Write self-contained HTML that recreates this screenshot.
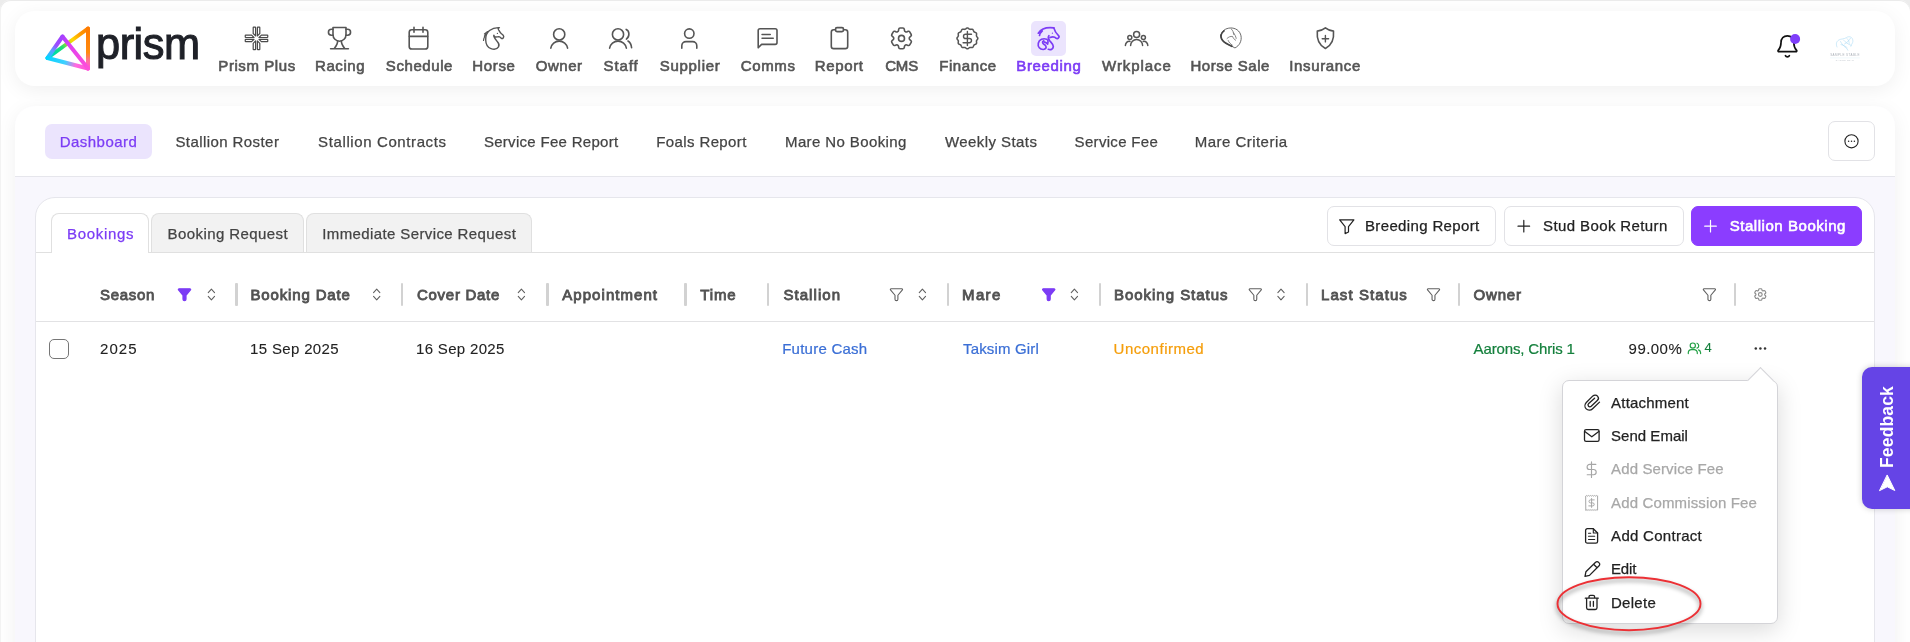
<!DOCTYPE html>
<html lang="en"><head><meta charset="utf-8"><title>Prism - Breeding</title>
<style>
*{box-sizing:border-box;margin:0;padding:0}
html,body{width:1910px;height:642px;overflow:hidden;background:#fff;font-family:"Liberation Sans",sans-serif;color:#222}
.abs{position:absolute}
#wrap{position:absolute;left:0;top:0;width:1910px;height:642px;overflow:hidden;will-change:transform}
#top{position:absolute;left:15px;top:11px;width:1880px;height:75px;background:#fff;border-radius:20px;box-shadow:0 4px 20px rgba(0,0,0,.064)}
#main{position:absolute;left:15px;top:106px;width:1880px;height:560px;background:#f8f7fd;border-radius:20px 20px 0 0;box-shadow:0 4px 20px rgba(0,0,0,.064);overflow:hidden}
#subnav{position:absolute;left:0;top:0;width:1880px;height:71px;background:#fff;border-bottom:1px solid #e6e6ec}
#frame{position:absolute;left:0;top:0;width:1910px;height:700px;border-radius:11px 11px 0 0;box-shadow:0 0 0 30px #ececec, inset 0 1px 0 #ebebeb, inset 1px 0 0 #f3f3f3;pointer-events:none;z-index:50}
.nav{position:absolute;top:55px;height:22px;line-height:22px;font-size:15px;font-weight:400;-webkit-text-stroke:.62px currentColor;color:#555;white-space:nowrap;}
.nav.on{color:#7c3cf5}
.sn{-webkit-text-stroke:.25px currentColor;position:absolute;top:124px;height:35px;line-height:35px;font-size:15px;color:#444;white-space:nowrap}
#card{position:absolute;left:35px;top:197px;width:1840px;height:500px;background:#fff;border:1px solid #e6e6ec;border-radius:20px 20px 0 0}
.sn.on{color:#7c3cf5}
.btn.pri{background:#8b3dff;border-color:#8b3dff}
.tab{position:absolute;top:213px;height:39px;line-height:39px;font-size:15px;color:#444;background:#f2f2f2;border:1px solid #e0e0e0;border-bottom:none;border-radius:8px 8px 0 0;text-align:center;white-space:nowrap}
.tt{-webkit-text-stroke:.25px currentColor;position:absolute;top:223px;height:22px;line-height:22px;font-size:15px;color:#444;white-space:nowrap}
.tt.on{color:#7c3cf5}
.bt{-webkit-text-stroke:.25px currentColor;position:absolute;top:215px;height:22px;line-height:22px;font-size:15px;color:#222;white-space:nowrap}
.bt.pri{color:#fff;-webkit-text-stroke:.6px currentColor}
.tab.on{background:#fff;height:40px}
.btn{position:absolute;top:206px;height:40px;line-height:38px;font-size:15px;color:#222;background:#fff;border:1px solid #e2e2e6;border-radius:7px;white-space:nowrap}
.th{position:absolute;top:284px;height:22px;line-height:22px;font-size:15px;font-weight:400;-webkit-text-stroke:.85px currentColor;color:#525252;white-space:nowrap}
.sep{position:absolute;top:283px;width:2.5px;height:23px;background:#d2d2d2;border-radius:1px}
.td{-webkit-text-stroke:.1px currentColor;position:absolute;top:337.700px;height:22px;line-height:22px;font-size:15px;color:#222;white-space:nowrap}
.mi{-webkit-text-stroke:.25px currentColor;position:absolute;height:22px;line-height:22px;font-size:15px;color:#222;white-space:nowrap}
.mi.dis{color:#a8a8a8}
</style></head><body>
<div id="wrap">
<div id="top"></div>
<div id="frame"></div>
<div id="wm" class="abs" style="left:96px;top:18.700px;font-size:44.500px;line-height:50px;color:#1f2128;letter-spacing:-.5px;-webkit-text-stroke:1.100px #1f2128;transform:scaleX(.975);transform-origin:0 0">prism</div>
<div class="abs" style="left:1031px;top:21px;width:35px;height:35px;border-radius:5px;background:#ebe4fd"></div>
<svg id="topsvg" class="abs" style="left:0;top:0" width="1910" height="100" viewBox="0 0 1910 100" fill="none" stroke="#555" stroke-width="1.6" stroke-linecap="round" stroke-linejoin="round">

<!-- logo -->
<defs>
<linearGradient id="lg1" gradientUnits="userSpaceOnUse" x1="46" y1="58.5" x2="62" y2="35"><stop offset="0" stop-color="#00d5ff"/><stop offset=".35" stop-color="#5aa0ff"/><stop offset=".6" stop-color="#9b4dff"/><stop offset="1" stop-color="#a040ff"/></linearGradient>
<linearGradient id="lg2" gradientUnits="userSpaceOnUse" x1="62" y1="35" x2="88" y2="69.5"><stop offset="0" stop-color="#a040ff"/><stop offset=".3" stop-color="#e040f0"/><stop offset="1" stop-color="#ff4fd8"/></linearGradient>
<linearGradient id="lg3" gradientUnits="userSpaceOnUse" x1="88" y1="69.5" x2="46" y2="58.5"><stop offset="0" stop-color="#ff4fd8"/><stop offset=".3" stop-color="#ff6ae0"/><stop offset=".55" stop-color="#40d0ff"/><stop offset="1" stop-color="#00d5ff"/></linearGradient>
<linearGradient id="lg4" gradientUnits="userSpaceOnUse" x1="88" y1="27" x2="88" y2="69.5"><stop offset="0" stop-color="#ff7a00"/><stop offset=".6" stop-color="#ff8a10"/><stop offset=".8" stop-color="#ff70a0"/><stop offset="1" stop-color="#ff4fd8"/></linearGradient>
<linearGradient id="lg5" gradientUnits="userSpaceOnUse" x1="88" y1="27" x2="46" y2="58.5"><stop offset="0" stop-color="#ff7a00"/><stop offset=".2" stop-color="#ff9a00"/><stop offset=".38" stop-color="#ffd800"/><stop offset=".5" stop-color="#b0e020"/><stop offset=".62" stop-color="#20e070"/><stop offset=".8" stop-color="#00dca0"/><stop offset="1" stop-color="#00d5ff"/></linearGradient>
</defs>
<g stroke-width="4">
<path d="M88 28.5L47.5 58" stroke="url(#lg5)"/>
<path d="M88 28.5V68.5" stroke="url(#lg4)"/>
<path d="M47.5 58L62.5 36.5" stroke="url(#lg1)"/>
<path d="M88 68.5L47.5 58" stroke="url(#lg3)"/>
<path d="M62.5 36.5L88 68.5" stroke="url(#lg2)"/>
</g>
<!-- prism plus -->
<path d="M253.20 27.60Q253.20 27.15 253.65 27.15L255.15 27.15Q255.60 27.15 255.60 27.60L255.60 35.90L253.20 33.50ZM259.80 27.60Q259.80 27.15 259.35 27.15L257.85 27.15Q257.40 27.15 257.40 27.60L257.40 35.90L259.80 33.50ZM267.30 35.10Q267.75 35.10 267.75 35.55L267.75 37.05Q267.75 37.50 267.30 37.50L259.00 37.50L261.40 35.10ZM267.30 41.70Q267.75 41.70 267.75 41.25L267.75 39.75Q267.75 39.30 267.30 39.30L259.00 39.30L261.40 41.70ZM259.80 49.20Q259.80 49.65 259.35 49.65L257.85 49.65Q257.40 49.65 257.40 49.20L257.40 40.90L259.80 43.30ZM253.20 49.20Q253.20 49.65 253.65 49.65L255.15 49.65Q255.60 49.65 255.60 49.20L255.60 40.90L253.20 43.30ZM245.70 41.70Q245.25 41.70 245.25 41.25L245.25 39.75Q245.25 39.30 245.70 39.30L254.00 39.30L251.60 41.70ZM245.70 35.10Q245.25 35.10 245.25 35.55L245.25 37.05Q245.25 37.50 245.70 37.50L254.00 37.50L251.60 35.10Z" stroke="#4a4a4a" stroke-width="1.2"/>
<!-- trophy -->
<path d="M333 27.5h13v7.2a6.5 6.5 0 0 1-13 0z"/>
<path d="M333 29.3h-1.6a2.9 2.9 0 0 0 0 5.9h1.8M346 29.3h1.6a2.9 2.9 0 0 1 0 5.9h-1.8"/>
<path d="M337.6 40.8c.3 3.2-1.600 5.600-3.300 7.700M341.400 40.800c-.3 3.200 1.600 5.600 3.300 7.700M330.600 48.800h17.800"/>
<!-- calendar -->
<rect x="409.200" y="29.800" width="18.600" height="19.200" rx="2.600"/>
<path d="M414 27.300v5M423 27.300v5M409.400 36.400h18.200"/>
<!-- horse -->
<path d="M499.400 27.700C496 27.500 492.500 28.300 489.500 30.500C486.800 32.600 485.600 36.500 485.700 40C485.800 44 488 47.600 491 48.600C494 49.600 497.200 48.900 498.500 46.800C499.600 45 498.800 43.200 497.400 41.700C496 40.200 494.600 38.600 493.900 36.600C493.650 35.900 493.700 35.400 493.900 35.200C494.100 36.200 494.600 36.900 495.400 37C497 37.200 498.200 36.400 499.600 36.900C500.600 37.300 501 38.400 501.800 38.600C502.800 38.800 503.800 37.400 503.700 36.400C503.600 35.200 502.400 34.400 501.400 33.700C500 32.700 499.300 31 498.700 30C498.400 29.400 498.200 28.900 498.200 28.500C498.600 28.100 499 27.900 499.400 27.700Z" stroke-width="1.400"/>
<path d="M487.600 31.600l-3.200 2.300M486.300 33.500l-1.900 2.700M485.500 35.500c-1.200 1.500-1.800 3.200-2 5" stroke-width="1.200"/>
<circle cx="497.400" cy="33.400" r=".65" fill="#555" stroke="none"/>
<!-- owner -->
<circle cx="559.200" cy="34.400" r="5.600"/><path d="M550.800 48.200a8.500 8.300 0 0 1 16.800 0"/>
<!-- staff -->
<circle cx="618" cy="34.400" r="5.600"/><path d="M609.600 48.200a8.500 8.300 0 0 1 16.800 0"/>
<path d="M626.200 29.400c3.300 1.300 3.800 7 .2 9.700M628 41c2.200 1.400 3.400 3.800 3.600 6.800"/>
<!-- supplier -->
<circle cx="689.300" cy="33.600" r="4.700"/><path d="M681.800 48.200v-2.400a4.200 4.200 0 0 1 4.200-4.200h6.600a4.200 4.200 0 0 1 4.200 4.200v2.400"/>
<!-- comms -->
<path d="M758.200 47.800v-17.200a1.800 1.800 0 0 1 1.800-1.800h15.200a1.800 1.800 0 0 1 1.800 1.800v12a1.800 1.800 0 0 1-1.800 1.800h-13.600z"/>
<path d="M762 34.500h8.300M762 38.300h11.300" stroke-width="1.400"/>
<!-- report -->
<path d="M835.500 29.800h-1.800a2.400 2.400 0 0 0-2.400 2.400v14a2.400 2.400 0 0 0 2.400 2.400h11.600a2.400 2.400 0 0 0 2.400-2.400v-14a2.400 2.400 0 0 0-2.400-2.400h-1.800"/>
<rect x="835.500" y="27.600" width="8" height="4" rx="1.500"/>

<!-- cms gear -->
<g transform="translate(887.70 24.60) scale(1.150)" stroke-width="1.39"><path d="M9.594 3.94c.09-.542.56-.94 1.11-.94h2.593c.55 0 1.02.398 1.11.94l.213 1.281c.063.374.313.686.645.87.074.04.147.083.22.127.325.196.72.257 1.075.124l1.217-.456a1.125 1.125 0 0 1 1.37.49l1.296 2.247a1.125 1.125 0 0 1-.26 1.431l-1.003.827c-.293.241-.438.613-.43.992a7.723 7.723 0 0 1 0 .255c-.008.378.137.75.43.991l1.004.827c.424.35.534.955.26 1.43l-1.298 2.247a1.125 1.125 0 0 1-1.369.491l-1.217-.456c-.355-.133-.75-.072-1.076.124a6.47 6.47 0 0 1-.22.128c-.331.183-.581.495-.644.869l-.213 1.281c-.09.543-.56.94-1.11.94h-2.594c-.55 0-1.019-.398-1.11-.94l-.213-1.281c-.062-.374-.312-.686-.644-.87a6.52 6.52 0 0 1-.22-.127c-.325-.196-.72-.257-1.076-.124l-1.217.456a1.125 1.125 0 0 1-1.369-.49l-1.297-2.247a1.125 1.125 0 0 1 .26-1.431l1.004-.827c.292-.24.437-.613.43-.991a6.932 6.932 0 0 1 0-.255c.007-.38-.138-.751-.43-.992l-1.004-.827a1.125 1.125 0 0 1-.26-1.43l1.297-2.247a1.125 1.125 0 0 1 1.37-.491l1.216.456c.356.133.751.072 1.076-.124.072-.044.146-.086.22-.128.332-.183.582-.495.644-.869l.214-1.28Z"/><circle cx="12" cy="12" r="2.600"/></g>
<!-- finance -->
<path d="M967.4 28.0L967.7 28.0L967.9 28.1L968.2 28.2L968.5 28.4L968.7 28.6L968.9 28.8L969.2 29.0L969.4 29.1L969.6 29.2L969.8 29.3L970.1 29.4L970.3 29.4L970.6 29.3L970.9 29.3L971.2 29.3L971.5 29.2L971.8 29.2L972.1 29.2L972.4 29.3L972.6 29.4L972.8 29.6L973.0 29.8L973.2 30.0L973.3 30.3L973.4 30.5L973.5 30.8L973.6 31.1L973.8 31.3L973.9 31.6L974.0 31.8L974.2 31.9L974.5 32.0L974.7 32.2L975.0 32.3L975.3 32.4L975.5 32.5L975.8 32.6L976.0 32.8L976.2 33.0L976.4 33.2L976.5 33.4L976.6 33.7L976.6 34.0L976.6 34.3L976.5 34.6L976.5 34.9L976.5 35.2L976.4 35.5L976.4 35.7L976.5 36.0L976.6 36.2L976.7 36.4L976.8 36.6L977.0 36.9L977.2 37.1L977.4 37.3L977.6 37.6L977.7 37.9L977.8 38.1L977.8 38.4L977.8 38.7L977.7 38.9L977.6 39.2L977.4 39.5L977.2 39.7L977.0 39.9L976.8 40.2L976.7 40.4L976.6 40.6L976.5 40.8L976.4 41.1L976.4 41.3L976.5 41.6L976.5 41.9L976.5 42.2L976.6 42.5L976.6 42.8L976.6 43.1L976.5 43.4L976.4 43.6L976.2 43.8L976.0 44.0L975.8 44.2L975.5 44.3L975.3 44.4L975.0 44.5L974.7 44.6L974.5 44.8L974.2 44.9L974.0 45.0L973.9 45.2L973.8 45.5L973.6 45.7L973.5 46.0L973.4 46.3L973.3 46.5L973.2 46.8L973.0 47.0L972.8 47.2L972.6 47.4L972.4 47.5L972.1 47.6L971.8 47.6L971.5 47.6L971.2 47.5L970.9 47.5L970.6 47.5L970.3 47.4L970.1 47.4L969.8 47.5L969.6 47.6L969.4 47.7L969.2 47.8L968.9 48.0L968.7 48.2L968.5 48.4L968.2 48.6L967.9 48.7L967.7 48.8L967.4 48.8L967.1 48.8L966.9 48.7L966.6 48.6L966.3 48.4L966.1 48.2L965.9 48.0L965.6 47.8L965.4 47.7L965.2 47.6L965.0 47.5L964.7 47.4L964.5 47.4L964.2 47.5L963.9 47.5L963.6 47.5L963.3 47.6L963.0 47.6L962.7 47.6L962.4 47.5L962.2 47.4L962.0 47.2L961.8 47.0L961.6 46.8L961.5 46.5L961.4 46.3L961.3 46.0L961.2 45.7L961.0 45.5L960.9 45.2L960.8 45.0L960.6 44.9L960.3 44.8L960.1 44.6L959.8 44.5L959.5 44.4L959.3 44.3L959.0 44.2L958.8 44.0L958.6 43.8L958.4 43.6L958.3 43.4L958.2 43.1L958.2 42.8L958.2 42.5L958.3 42.2L958.3 41.9L958.3 41.6L958.4 41.3L958.4 41.1L958.3 40.8L958.2 40.6L958.1 40.4L958.0 40.2L957.8 39.9L957.6 39.7L957.4 39.5L957.2 39.2L957.1 38.9L957.0 38.7L957.0 38.4L957.0 38.1L957.1 37.9L957.2 37.6L957.4 37.3L957.6 37.1L957.8 36.9L958.0 36.6L958.1 36.4L958.2 36.2L958.3 36.0L958.4 35.7L958.4 35.5L958.3 35.2L958.3 34.9L958.3 34.6L958.2 34.3L958.2 34.0L958.2 33.7L958.3 33.4L958.4 33.2L958.6 33.0L958.8 32.8L959.0 32.6L959.3 32.5L959.5 32.4L959.8 32.3L960.1 32.2L960.3 32.0L960.6 31.9L960.8 31.8L960.9 31.6L961.0 31.3L961.2 31.1L961.3 30.8L961.4 30.5L961.5 30.3L961.6 30.0L961.8 29.8L962.0 29.6L962.2 29.4L962.4 29.3L962.7 29.2L963.0 29.2L963.3 29.2L963.6 29.3L963.9 29.3L964.2 29.3L964.5 29.4L964.7 29.4L965.0 29.3L965.2 29.2L965.4 29.1L965.6 29.0L965.9 28.8L966.1 28.6L966.3 28.4L966.6 28.2L966.9 28.1L967.1 28.0Z" stroke-width="1.500"/>
<path d="M971.500 34.300h-5.900a2.100 2.100 0 0 0 0 4.200h3.800a2.100 2.100 0 0 1 0 4.200h-6.300M967.400 31.500v14" stroke-width="1.400"/>
<!-- breeding -->
<g stroke="#7c3cf5" stroke-width="1.700">
<path d="M1038.300 33.200c2.500-3.800 7.800-6.300 15.500-5.300M1039.500 35.500c.3-1.800 1.400-3.200 2.800-4.500"/>
<path d="M1053.800 27.900c.8 3.200 2.600 5.700 4.900 8 .6.600.2 1.600-.5 2.300-.5.600-1.400.7-1.900.1-1.500-1.500-4.200-1.800-6.300-.7"/>
<path d="M1048.900 35.600c-1 1.500-.6 3.400.6 5 1.500 2 3.800 3.500 3.800 6 0 2.300-2.400 3.600-5 2.700"/>
<path d="M1046.700 39.300c-3.500-1.500-7.600.3-8.400 4-.8 3.600 1.800 6.300 5 6.200 2.400-.1 3.500-1.800 2.400-3.600-.9-1.500-2.800-1.500-3.100-3.200-.2-1 .3-1.700 1.100-2"/>
<path d="M1044 41.800c1.500.3 2.900 1.100 3.600 2.400.6-1.400.6-2.800.1-4.200"/>
</g>
<circle cx="1052.400" cy="33.200" r=".6" fill="#7c3cf5" stroke="none"/>
<!-- wrkplace -->
<g stroke-width="1.500">
<circle cx="1136.600" cy="34.400" r="3"/><circle cx="1129.800" cy="37.500" r="2"/><circle cx="1143.400" cy="37.500" r="2"/>
<path d="M1130.600 45.600a6 6.200 0 0 1 12 0M1125.400 45.600c0-2.600 1.900-4.600 4.600-4.200M1147.800 45.600c0-2.600-1.900-4.600-4.600-4.200"/>
</g>
<!-- horse sale -->
<g stroke="#444">
<path d="M1234.600 47.700c-4-2.600-9.300-3.500-12.400-7.600-2.200-3-1.400-7.400 1.800-9.900 3.600-2.800 9.200-3 13.100-.4 4.100 2.800 5.300 8.700 2.800 13.400-1 1.900-2.700 3.600-4.500 4.500z" stroke-width=".8"/>
<path d="M1231.800 46.300c-3.600-2-8.200-3.200-10.200-7.400-1.200-2.600-.2-5.900 2.400-8" stroke-width="1.700"/>
<path d="M1231.200 28.900c1.800 1.800 2.500 3.600 2.600 5.600M1227 38.500c1.500-1.600 3.600-2.400 5.600-2 .6 1.700 1.600 3 3 3.700M1228.200 40.500c.8 2 2.200 3.500 4 4.500M1233.600 33c1.300 1.600 2.200 3.400 2.600 5.400" stroke-width=".8" stroke="#666"/>
</g>
<!-- insurance -->
<path d="M1325.400 27.900c-2.300 1.900-5 2.900-8.100 3.200-.7 7.600 1.600 14 8.100 17.400 6.500-3.400 8.800-9.800 8.100-17.400-3.100-.3-5.800-1.300-8.100-3.200z"/>
<path d="M1325.400 35.500v6.400M1322.200 38.700h6.400" stroke-width="1.400"/>
<!-- bell -->
<g stroke="#111" stroke-width="1.700">
<path d="M1778.200 50.300c1.900-2 2.800-4.600 2.800-7.500 0-4.300 2.700-7 6.400-7s6.400 2.700 6.400 7c0 2.900.9 5.500 2.800 7.500.4.600 0 1.400-.8 1.400h-16.800c-.8 0-1.200-.8-.8-1.400z"/>
<path d="M1785.400 55.700c.8 1.500 3.200 1.500 4 0"/>
</g>
<circle cx="1795.100" cy="39" r="5" fill="#7f3ffa" stroke="none"/>
<!-- avatar -->
<g stroke="#9fd4f2" stroke-width=".5">
<path d="M1837 47c-1.200-2.500-.8-5.500 1.800-7 2.400-1.400 5.400-.8 7.600-2.400 1.500-1.100 3.600-1.200 5-.1 1.400 1.200 1.900 3.400 1.200 5.200-.5 1.300-1.600 2.200-1.800 3.600M1840.500 41.500c1.200 2.600 3.200 4.600 5.400 6.300.9.700 1.600 1.500 2 2.500M1843.500 40c2 2.500 4.600 4.200 7.500 5.300M1847 38.500c1.400 1.300 2.100 3 2.300 4.900M1841 44.600c2.500.4 4.600 1.500 6.300 3.300M1850.500 38.200c-1.400 2.500-3.500 4.400-6 5.800"/>
</g>
<text x="1845" y="55.600" font-family="Liberation Sans, sans-serif" font-size="3" letter-spacing=".42" text-anchor="middle" fill="#aab0b8" stroke="none">SAMPLE STABLE</text>
<path d="M1830.500 57.900h29" stroke="#d8edf8" stroke-width=".4"/>
<text x="1845" y="61" font-family="Liberation Sans, sans-serif" font-size="2.200" letter-spacing=".3" text-anchor="middle" fill="#c0c5cc" stroke="none">RACING TEAM</text>

</svg>
<div class="nav" style="left:218.30px;letter-spacing:0.581px">Prism Plus</div>
<div class="nav" style="left:315.00px;letter-spacing:0.570px">Racing</div>
<div class="nav" style="left:385.80px;letter-spacing:0.585px">Schedule</div>
<div class="nav" style="left:472.20px;letter-spacing:0.683px">Horse</div>
<div class="nav" style="left:535.80px;letter-spacing:0.529px">Owner</div>
<div class="nav" style="left:603.60px;letter-spacing:0.847px">Staff</div>
<div class="nav" style="left:659.80px;letter-spacing:0.694px">Supplier</div>
<div class="nav" style="left:740.70px;letter-spacing:0.634px">Comms</div>
<div class="nav" style="left:814.70px;letter-spacing:0.649px">Report</div>
<div class="nav" style="left:885.20px;letter-spacing:-0.164px">CMS</div>
<div class="nav" style="left:939.20px;letter-spacing:0.596px">Finance</div>
<div class="nav on" style="left:1016.30px;letter-spacing:0.657px">Breeding</div>
<div class="nav" style="left:1102.10px;letter-spacing:0.929px">Wrkplace</div>
<div class="nav" style="left:1190.50px;letter-spacing:0.516px">Horse Sale</div>
<div class="nav" style="left:1289.20px;letter-spacing:0.659px">Insurance</div>
<div id="main"><div id="subnav"></div></div>
<div class="abs" style="left:45px;top:124px;width:107px;height:35px;border-radius:7px;background:#ebe4fd"></div>
<div class="sn on" style="left:59.80px;letter-spacing:0.445px">Dashboard</div>
<div class="sn" style="left:175.40px;letter-spacing:0.425px">Stallion Roster</div>
<div class="sn" style="left:318.10px;letter-spacing:0.609px">Stallion Contracts</div>
<div class="sn" style="left:483.90px;letter-spacing:0.297px">Service Fee Report</div>
<div class="sn" style="left:656.30px;letter-spacing:0.382px">Foals Report</div>
<div class="sn" style="left:785.00px;letter-spacing:0.389px">Mare No Booking</div>
<div class="sn" style="left:945.00px;letter-spacing:0.422px">Weekly Stats</div>
<div class="sn" style="left:1074.60px;letter-spacing:0.321px">Service Fee</div>
<div class="sn" style="left:1194.70px;letter-spacing:0.472px">Mare Criteria</div>
<div class="abs" style="left:1828px;top:121px;width:47px;height:40px;border:1px solid #e2e2e6;border-radius:7px;background:#fff"></div>
<div id="card"></div>
<div class="abs" style="left:36px;top:252px;width:1838px;height:1px;background:#e0e0e0"></div>
<div class="tab on" style="left:51px;width:98px"></div>
<div class="tt on" style="left:67.10px;letter-spacing:0.670px">Bookings</div>
<div class="tab" style="left:151px;width:153px"></div>
<div class="tt" style="left:167.60px;letter-spacing:0.409px">Booking Request</div>
<div class="tab" style="left:306px;width:226px"></div>
<div class="tt" style="left:322.20px;letter-spacing:0.392px">Immediate Service Request</div>
<div class="btn" style="left:1327px;width:169px"></div>
<div class="bt" style="left:1365.00px;letter-spacing:0.352px">Breeding Report</div>
<div class="btn" style="left:1504px;width:180px"></div>
<div class="bt" style="left:1543.10px;letter-spacing:0.389px">Stud Book Return</div>
<div class="btn pri" style="left:1691px;width:171px"></div>
<div class="bt pri" style="left:1729.70px;letter-spacing:0.545px">Stallion Booking</div>
<div class="th" style="left:100.00px;letter-spacing:0.694px">Season</div>
<div class="th" style="left:250.50px;letter-spacing:0.844px">Booking Date</div>
<div class="th" style="left:417.00px;letter-spacing:0.720px">Cover Date</div>
<div class="th" style="left:562.30px;letter-spacing:1.045px">Appointment</div>
<div class="th" style="left:700.30px;letter-spacing:0.822px">Time</div>
<div class="th" style="left:783.40px;letter-spacing:1.064px">Stallion</div>
<div class="th" style="left:962.00px;letter-spacing:1.389px">Mare</div>
<div class="th" style="left:1114.00px;letter-spacing:0.969px">Booking Status</div>
<div class="th" style="left:1321.00px;letter-spacing:1.076px">Last Status</div>
<div class="th" style="left:1473.60px;letter-spacing:0.804px">Owner</div>
<div class="sep" style="left:235.2px"></div>
<div class="sep" style="left:400.8px"></div>
<div class="sep" style="left:546px"></div>
<div class="sep" style="left:684px"></div>
<div class="sep" style="left:766.8px"></div>
<div class="sep" style="left:946.5px"></div>
<div class="sep" style="left:1098.5px"></div>
<div class="sep" style="left:1305.6px"></div>
<div class="sep" style="left:1457.7px"></div>
<div class="sep" style="left:1733.6px"></div>
<div class="abs" style="left:36px;top:321px;width:1838px;height:1px;background:#e2e2e4"></div>
<div class="abs" style="left:49px;top:339px;width:20px;height:20px;border:1px solid #767676;border-radius:5px;background:#fff"></div>
<div class="td" style="left:100.00px;letter-spacing:1.058px;color:#222">2025</div>
<div class="td" style="left:250.00px;letter-spacing:0.346px;color:#222">15 Sep 2025</div>
<div class="td" style="left:416.00px;letter-spacing:0.326px;color:#222">16 Sep 2025</div>
<div class="td" style="left:782.20px;letter-spacing:0.241px;-webkit-text-stroke:.22px currentColor;color:#3b6fd6">Future Cash</div>
<div class="td" style="left:963.00px;letter-spacing:0.167px;-webkit-text-stroke:.22px currentColor;color:#3b6fd6">Taksim Girl</div>
<div class="td" style="left:1113.60px;letter-spacing:0.501px;-webkit-text-stroke:.22px currentColor;color:#f59e0b">Unconfirmed</div>
<div class="td" style="left:1473.60px;letter-spacing:-0.145px;-webkit-text-stroke:.22px currentColor;color:#15803d">Aarons, Chris 1</div>
<div class="td" style="left:1628.60px;letter-spacing:0.453px;color:#222">99.00%</div>
<div class="td" style="left:1704.500px;top:337.100px;color:#15803d;font-size:13px">4</div>
<div id="pop" class="abs" style="left:1562px;top:380px;width:216px;height:244px;background:#fff;border:1px solid #d4d4d8;border-radius:7px;box-shadow:0 6px 24px rgba(0,0,0,.15)"></div>
<div class="abs" style="left:1751px;top:371px;width:19px;height:19px;background:#fff;border-left:1px solid #d4d4d8;border-top:1px solid #d4d4d8;transform:rotate(45deg)"></div>
<div class="mi" style="left:1611.10px;letter-spacing:0.200px;top:391.5px">Attachment</div>
<div class="mi" style="left:1611.10px;letter-spacing:0.014px;top:425px">Send Email</div>
<div class="mi dis" style="left:1611.10px;letter-spacing:0.118px;top:458px">Add Service Fee</div>
<div class="mi dis" style="left:1611.10px;letter-spacing:0.139px;top:491.5px">Add Commission Fee</div>
<div class="mi" style="left:1611.10px;letter-spacing:0.284px;top:524.7px">Add Contract</div>
<div class="mi" style="left:1610.90px;letter-spacing:-0.127px;top:558px">Edit</div>
<div class="mi" style="left:1610.90px;letter-spacing:0.317px;top:591.5px">Delete</div>
<div id="fb" class="abs" style="left:1862px;top:367px;width:60px;height:142px;background:#6544e6;border-radius:10px 0 0 10px;box-shadow:0 0 6px rgba(0,0,0,.2)"></div>
<div class="abs" style="left:1886.5px;top:427px;width:0;height:0"><div style="position:absolute;left:-60px;top:-12px;width:120px;height:24px;line-height:24px;text-align:center;transform:rotate(-90deg);color:#fff;font-weight:700;font-size:17.5px;letter-spacing:.15px;white-space:nowrap">Feedback</div></div>
<svg id="mainsvg" class="abs" style="left:0;top:100px" width="1910" height="542" viewBox="0 100 1910 542" fill="none" stroke="#555" stroke-width="1.300" stroke-linecap="round" stroke-linejoin="round">
<path d="M179.10 288.80h10.8a.7.7 0 0 1 .55 1.15l-4.5 5.3v3.9a1.45 1.45 0 0 1-2.9 0v-3.9l-4.5-5.3a.7.7 0 0 1 .55-1.15z" fill="#7c3cf5" stroke="#7c3cf5" stroke-width="1.3"/>
<path d="M208.25 292.70l3.15-3.6 3.15 3.6M208.25 296.30l3.15 3.6 3.15-3.6" stroke="#606060" stroke-width="1.05"/>
<path d="M373.55 292.70l3.15-3.6 3.15 3.6M373.55 296.30l3.15 3.6 3.15-3.6" stroke="#606060" stroke-width="1.05"/>
<path d="M518.25 292.70l3.15-3.6 3.15 3.6M518.25 296.30l3.15 3.6 3.15-3.6" stroke="#606060" stroke-width="1.05"/>
<path d="M891.05 288.80h10.8a.7.7 0 0 1 .55 1.15l-4.5 5.3v3.9a1.45 1.45 0 0 1-2.9 0v-3.9l-4.5-5.3a.7.7 0 0 1 .55-1.15z" stroke="#606060" stroke-width="1.1"/>
<path d="M919.25 292.70l3.15-3.6 3.15 3.6M919.25 296.30l3.15 3.6 3.15-3.6" stroke="#606060" stroke-width="1.05"/>
<path d="M1043.30 288.80h10.8a.7.7 0 0 1 .55 1.15l-4.5 5.3v3.9a1.45 1.45 0 0 1-2.9 0v-3.9l-4.5-5.3a.7.7 0 0 1 .55-1.15z" fill="#7c3cf5" stroke="#7c3cf5" stroke-width="1.3"/>
<path d="M1071.25 292.70l3.15-3.6 3.15 3.6M1071.25 296.30l3.15 3.6 3.15-3.6" stroke="#606060" stroke-width="1.05"/>
<path d="M1249.90 288.80h10.8a.7.7 0 0 1 .55 1.15l-4.5 5.3v3.9a1.45 1.45 0 0 1-2.9 0v-3.9l-4.5-5.3a.7.7 0 0 1 .55-1.15z" stroke="#606060" stroke-width="1.1"/>
<path d="M1277.85 292.70l3.15-3.6 3.15 3.6M1277.85 296.30l3.15 3.6 3.15-3.6" stroke="#606060" stroke-width="1.05"/>
<path d="M1428.10 288.80h10.8a.7.7 0 0 1 .55 1.15l-4.5 5.3v3.9a1.45 1.45 0 0 1-2.9 0v-3.9l-4.5-5.3a.7.7 0 0 1 .55-1.15z" stroke="#606060" stroke-width="1.1"/>
<path d="M1704.00 288.80h10.8a.7.7 0 0 1 .55 1.15l-4.5 5.3v3.9a1.45 1.45 0 0 1-2.9 0v-3.9l-4.5-5.3a.7.7 0 0 1 .55-1.15z" stroke="#606060" stroke-width="1.1"/>
<g transform="translate(1752.57 286.77) scale(0.644)" stroke="#8c8c8c" stroke-width="1.78"><path d="M9.594 3.94c.09-.542.56-.94 1.11-.94h2.593c.55 0 1.02.398 1.11.94l.213 1.281c.063.374.313.686.645.87.074.04.147.083.22.127.325.196.72.257 1.075.124l1.217-.456a1.125 1.125 0 0 1 1.37.49l1.296 2.247a1.125 1.125 0 0 1-.26 1.431l-1.003.827c-.293.241-.438.613-.43.992a7.723 7.723 0 0 1 0 .255c-.008.378.137.75.43.991l1.004.827c.424.35.534.955.26 1.43l-1.298 2.247a1.125 1.125 0 0 1-1.369.491l-1.217-.456c-.355-.133-.75-.072-1.076.124a6.47 6.47 0 0 1-.22.128c-.331.183-.581.495-.644.869l-.213 1.281c-.09.543-.56.94-1.11.94h-2.594c-.55 0-1.019-.398-1.11-.94l-.213-1.281c-.062-.374-.312-.686-.644-.87a6.52 6.520 0 0 1-.22-.127c-.325-.196-.72-.257-1.076-.124l-1.217.456a1.125 1.125 0 0 1-1.369-.49l-1.297-2.247a1.125 1.125 0 0 1 .26-1.431l1.004-.827c.292-.24.437-.613.43-.991a6.932 6.932 0 0 1 0-.255c.007-.38-.138-.751-.43-.992l-1.004-.827a1.125 1.125 0 0 1-.26-1.430l1.297-2.247a1.125 1.125 0 0 1 1.370-.491l1.216.456c.356.133.751.072 1.076-.124.072-.044.146-.086.220-.128.332-.183.582-.495.644-.869l.214-1.280Z"/><circle cx="12" cy="12" r="2.900"/></g>
<g stroke="#22a045" stroke-width="1.200"><circle cx="1692.800" cy="345.600" r="2.600"/><path d="M1688.300 353.600v-.8a3.200 3.200 0 0 1 3.200-3.200h2.600a3.200 3.200 0 0 1 3.200 3.200v.8M1697 343.200a2.600 2.600 0 0 1 0 4.900M1700.600 353.600v-.8a3.200 3.200 0 0 0-2-2.900"/></g>
<g fill="#333" stroke="none"><circle cx="1755.800" cy="348.400" r="1.250"/><circle cx="1760.400" cy="348.400" r="1.250"/><circle cx="1765" cy="348.400" r="1.250"/></g>
<circle cx="1851.500" cy="141.300" r="6.600" stroke="#222" stroke-width="1.100"/><g fill="#222" stroke="none"><circle cx="1848.600" cy="141.300" r=".75"/><circle cx="1851.500" cy="141.300" r=".75"/><circle cx="1854.400" cy="141.300" r=".75"/></g>
<path d="M1339.700 219.800h14.200l-5.400 6.800v5.400l-3.400 1.600v-7z" stroke="#222" stroke-width="1.200"/>
<path d="M1523.800 220.400v11.600M1518 226.200h11.600" stroke="#222" stroke-width="1.200"/>
<path d="M1710.500 220.400v11.600M1704.700 226.200h11.600" stroke="#fff" stroke-width="1.200"/>
<g stroke="#222" stroke-width="1.300">
<path d="M1599.5 402.1L1592.6 408.7C1590.8 410.5 1587.9 410.6 1586.2 408.9C1584.5 407.2 1584.6 404.3 1586.3 402.5L1592.9 395.9C1594.2 394.7 1596.3 394.8 1597.5 396.1C1598.7 397.4 1598.6 399.4 1597.3 400.6L1591.2 406.3C1590.4 407 1589.2 407 1588.5 406.2C1587.8 405.4 1587.9 404.3 1588.7 403.6L1594.6 398.3"/>
<rect x="1584.500" y="429.700" width="14.600" height="11.600" rx="1.600"/><path d="M1584.800 431.500l7 5.300 7-5.300"/>
<path d="M1593.300 528.700h-6a1.700 1.700 0 0 0-1.700 1.700v11a1.700 1.700 0 0 0 1.700 1.700h8.600a1.700 1.700 0 0 0 1.700-1.700v-8.400z"/><path d="M1593.300 528.700v4.300h4.300M1588.500 536.300h6.200M1588.500 539.500h6.200M1588.500 533.200h2.200" stroke-width="1.100"/>
<path d="M1595.600 562.300a2 2 0 0 1 2.900 0l.6.600a2 2 0 0 1 0 2.900l-9.600 9.600-4.500.9.900-4.500zM1593.600 564.300l3.500 3.500"/>
<path d="M1585.300 598.200h13M1589 598.200v-1.500a1.400 1.400 0 0 1 1.400-1.400h2.800a1.400 1.400 0 0 1 1.400 1.400v1.500M1586.600 598.200v9.600a1.700 1.700 0 0 0 1.700 1.700h7a1.700 1.700 0 0 0 1.700-1.700v-9.600M1590.200 601.500v4.800M1593.400 601.500v4.800"/>
</g>
<g stroke="#a6a6a6" stroke-width="1.15">
<path d="M1595.900 464.300H1589.700a2.600 2.600 0 0 0 0 5.200H1593.600a2.600 2.600 0 0 1 0 5.200H1587.200M1591.500 461.900V477.500"/>
<path d="M1585.9 495.8q.5-.7 1 0t1 0 1 0 1 0 1 0 1 0 1 0 1 0 1 0 1 0 1 0 .7 0v14.200q-.5.7-1 0t-1 0-1 0-1 0-1 0-1 0-1 0-1 0-1 0-1 0-1 0-.7 0z" stroke-width="1"/>
<path d="M1594.200 499.900h-3.700a1.500 1.500 0 0 0 0 3h2.200a1.500 1.500 0 0 1 0 3h-3.900M1591.600 498.500v8.900" stroke-width="1"/>
</g>
<defs><filter id="es" x="-20%" y="-30%" width="140%" height="170%"><feGaussianBlur stdDeviation="2"/></filter></defs>
<ellipse cx="1629" cy="606.7" rx="71.500" ry="26.500" stroke="#000" stroke-opacity=".35" stroke-width="2.500" filter="url(#es)"/>
<ellipse cx="1629" cy="603.7" rx="71.5" ry="26.5" stroke="#ec3035" stroke-width="1.9"/>
<path d="M1887.300 475.300l7.500 15.200-7.500-3.700-7.500 3.700z" fill="#fff" stroke="#fff" stroke-width="1"/>

</svg>
</div>
</body></html>
